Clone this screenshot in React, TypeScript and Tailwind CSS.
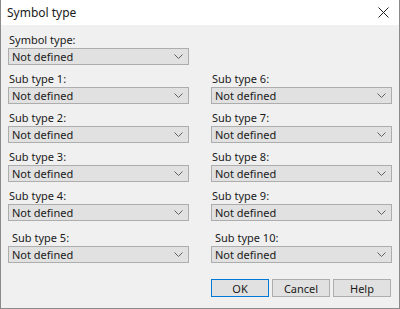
import React from "react";

const Chevron = () => (
  <svg width="9" height="5" viewBox="0 0 9 5" className="text-[#606060]">
    <path d="M0.5 0.5 L4.5 4.5 L8.5 0.5" fill="none" stroke="currentColor" strokeWidth="1" />
  </svg>
);

const Combo = () => (
  <div className="flex h-[17px] w-[181px] items-center justify-between border border-[#adadad] bg-[#e1e1e1] pl-[3px] pr-[5px] text-[11px] leading-none text-[#1a1a1a]">
    <span>Not defined</span>
    <Chevron />
  </div>
);

const Field = ({ label, indent }: { label: string; indent?: boolean }) => (
  <div className="flex flex-col">
    <div className={`h-[14px] text-[11px] leading-[14px] text-[#1a1a1a] ${indent ? "pl-[4px]" : "pl-[1px]"}`}>{label}</div>
    <div className="mt-[1px]">
      <Combo />
    </div>
  </div>
);

const Button = ({ label, primary }: { label: string; primary?: boolean }) => (
  <button
    className={`flex h-[18px] w-[58px] items-center justify-center bg-[#e1e1e1] text-[11px] leading-none text-[#1a1a1a] ${
      primary ? "border border-[#0078d7]" : "border border-[#adadad]"
    }`}
  >
    {label}
  </button>
);

export default function App() {
  return (
    <div
      className="flex h-[309px] w-[400px] flex-col border border-t-0 border-[#8a8a8a] bg-[#f0f0f0]"
      style={{ fontFamily: '"Noto Sans", "Open Sans", sans-serif' }}
    >
      {/* title bar */}
      <div className="flex h-[25px] items-center justify-between bg-white pl-[6px] pr-[10px]">
        <span className="text-[12px] text-[#1a1a1a]">Symbol type</span>
        <svg width="11" height="11" viewBox="0 0 11 11">
          <path d="M0.5 0.5 L10.5 10.5 M10.5 0.5 L0.5 10.5" stroke="#222" strokeWidth="1" />
        </svg>
      </div>

      <div className="flex flex-col pl-[7px] pt-[8px]">
        <Field label="Symbol type:" />

        <div className="mt-[7px] grid grid-cols-[181px_181px] gap-x-[22px] gap-y-[7px]">
          <Field label="Sub type 1:" />
          <Field label="Sub type 6:" />
          <Field label="Sub type 2:" />
          <Field label="Sub type 7:" />
          <Field label="Sub type 3:" />
          <Field label="Sub type 8:" />
          <Field label="Sub type 4:" />
          <Field label="Sub type 9:" />
        </div>

        <div className="mt-[10px] grid grid-cols-[181px_181px] gap-x-[22px]">
          <Field label="Sub type 5:" indent />
          <Field label="Sub type 10:" indent />
        </div>

        <div className="ml-[203px] mt-[16px] flex gap-[3px]">
          <Button label="OK" primary />
          <Button label="Cancel" />
          <Button label="Help" />
        </div>
      </div>
    </div>
  );
}
